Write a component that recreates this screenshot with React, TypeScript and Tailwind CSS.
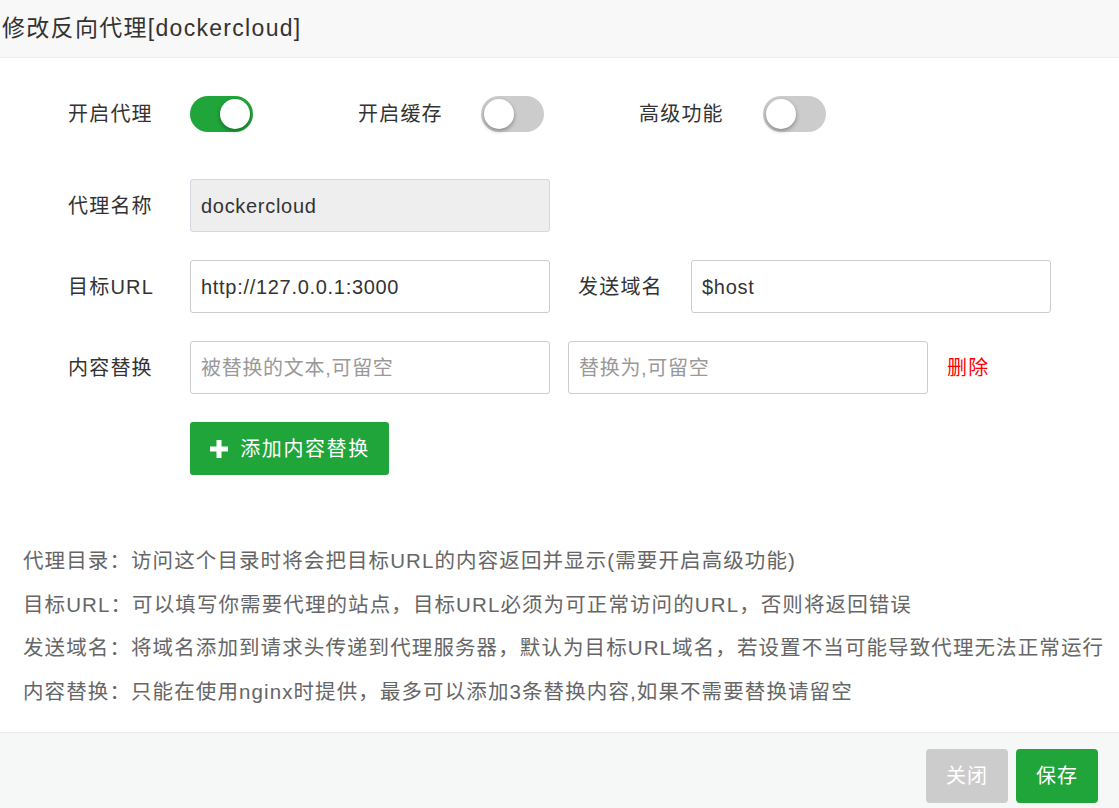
import React from 'react';

const font = { fontFamily: '"Liberation Sans", "Noto Sans CJK SC", sans-serif' };

function Toggle({ on }: { on: boolean }) {
  return (
    <div
      className={`relative h-[36px] w-[63px] rounded-full ${on ? 'bg-[#20a53a]' : 'bg-[#cccccc]'}`}
    >
      <div
        className={`absolute top-[3px] h-[30px] w-[30px] rounded-full bg-white shadow-[0_2px_4px_rgba(0,0,0,0.35)] ${
          on ? 'right-[3px]' : 'left-[3px]'
        }`}
      />
    </div>
  );
}

function Field({ value, placeholder, disabled }: { value?: string; placeholder?: string; disabled?: boolean }) {
  return (
    <div
      className={`flex h-[53px] w-[360px] items-center rounded-[3px] border px-[10px] text-[20px] tracking-[0.7px] ${
        disabled ? 'border-[#d6d6e6] bg-[#eeeeee] text-[#333]' : 'border-[#cccccc] bg-white text-[#333]'
      }`}
    >
      {value ? <span>{value}</span> : <span className="text-[#999]">{placeholder}</span>}
    </div>
  );
}

export default function App() {
  const help = [
    '代理目录：访问这个目录时将会把目标URL的内容返回并显示(需要开启高级功能)',
    '目标URL：可以填写你需要代理的站点，目标URL必须为可正常访问的URL，否则将返回错误',
    '发送域名：将域名添加到请求头传递到代理服务器，默认为目标URL域名，若设置不当可能导致代理无法正常运行',
    '内容替换：只能在使用nginx时提供，最多可以添加3条替换内容,如果不需要替换请留空',
  ];

  return (
    <div className="flex h-[808px] w-[1119px] flex-col bg-white text-[#333]" style={font}>
      {/* Title */}
      <div className="flex h-[58px] shrink-0 items-center border-b border-[#eeeeee] bg-[#f8f8f8] pl-[2px] text-[23px] tracking-[1.3px] text-[#333]">
        修改反向代理[dockercloud]
      </div>

      {/* Body */}
      <div className="flex flex-1 flex-col text-[20px] tracking-[1.2px]">
        <div className="mt-[38px] flex h-[36px] items-center">
          <div className="w-[190px] pl-[68px]">开启代理</div>
          <Toggle on />
          <div className="ml-[105px] w-[123px]">开启缓存</div>
          <Toggle on={false} />
          <div className="ml-[95px] w-[124px]">高级功能</div>
          <Toggle on={false} />
        </div>

        <div className="mt-[47px] flex items-center">
          <div className="w-[190px] pl-[68px]">代理名称</div>
          <Field value="dockercloud" disabled />
        </div>

        <div className="mt-[28px] flex items-center">
          <div className="w-[190px] pl-[68px]">目标URL</div>
          <Field value="http://127.0.0.1:3000" />
          <div className="ml-[28px] w-[113px]">发送域名</div>
          <Field value="$host" />
        </div>

        <div className="mt-[28px] flex items-center">
          <div className="w-[190px] pl-[68px]">内容替换</div>
          <Field placeholder="被替换的文本,可留空" />
          <div className="ml-[18px]">
            <Field placeholder="替换为,可留空" />
          </div>
          <div className="ml-[19px] text-[#ff0000]">删除</div>
        </div>

        <div className="mt-[28px] flex pl-[190px]">
          <div className="flex h-[53px] w-[199px] items-center justify-center gap-[11px] rounded-[3px] bg-[#20a53a] tracking-[1.6px] text-white">
            <svg width="20" height="20" viewBox="0 0 20 20">
              <path d="M7.5 1h5v6.5H19v5h-6.5V19h-5v-6.5H1v-5h6.5z" fill="#fff" />
            </svg>
            <span>添加内容替换</span>
          </div>
        </div>

        <div className="mt-[65px] flex flex-col pl-[23px] text-[20.5px] tracking-[1.1px] text-[#666]">
          {help.map((line) => (
            <div key={line} className="flex h-[43.5px] items-center whitespace-nowrap">
              {line}
            </div>
          ))}
        </div>
      </div>

      {/* Footer */}
      <div className="flex h-[76px] shrink-0 items-start justify-end gap-[8px] border-t border-[#eeeeee] bg-[#f6f7f7] pr-[21px] pt-[16px]">
        <div className="flex h-[54px] w-[82px] items-center justify-center rounded-[4px] bg-[#cccccc] text-[20px] tracking-[1px] text-white">
          关闭
        </div>
        <div className="flex h-[54px] w-[82px] items-center justify-center rounded-[4px] bg-[#20a53a] text-[20px] tracking-[1px] text-white">
          保存
        </div>
      </div>
    </div>
  );
}
